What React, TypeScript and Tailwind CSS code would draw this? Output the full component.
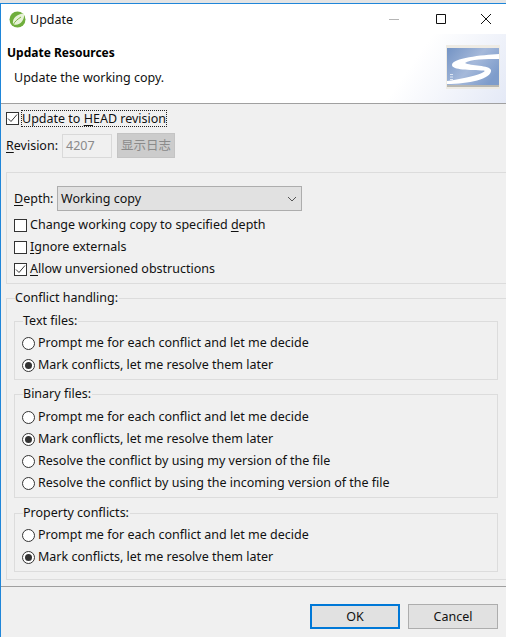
function Chk({ on }: { on?: boolean }) {
  return (
    <span className="flex h-[13px] w-[13px] shrink-0 items-center justify-center border border-[#333] bg-white">
      {on && (
        <svg width="11" height="11" viewBox="0 0 11 11" fill="none" stroke="#333" strokeWidth="1">
          <path d="M1 5.5 L4 8.5 L10 1.5" />
        </svg>
      )}
    </span>
  );
}

function U({ children }: { children: string }) {
  return <span className="underline underline-offset-2">{children}</span>;
}

function CheckRow({ on, children }: { on?: boolean; children: React.ReactNode }) {
  return (
    <div className="flex h-[22px] items-center gap-[3px]">
      <Chk on={on} />
      <span className="-mt-px">{children}</span>
    </div>
  );
}

function Radio({ on, children }: { on?: boolean; children: React.ReactNode }) {
  return (
    <div className="flex h-[22px] items-center gap-[3px]">
      <span className="flex h-[13px] w-[13px] shrink-0 items-center justify-center rounded-full border border-[#333] bg-white">
        {on && <span className="h-[7px] w-[7px] rounded-full bg-[#333]" />}
      </span>
      <span className="-mt-px">{children}</span>
    </div>
  );
}

function Logo() {
  return (
    <svg width="54" height="44" viewBox="0 0 54 44">
      <defs>
        <linearGradient id="lb" x1="0" y1="0" x2="1" y2="0.6">
          <stop offset="0" stopColor="#7393c4" />
          <stop offset="0.55" stopColor="#a5b9da" />
          <stop offset="1" stopColor="#7e9ccb" />
        </linearGradient>
      </defs>
      <rect x="0" y="0" width="54" height="44" fill="#eeebe4" />
      <rect x="1" y="3" width="52" height="38" fill="url(#lb)" />
      <rect x="1" y="40" width="52" height="2" fill="#b9b8b2" />
      <path d="M53 9 C36 10 6 13 6 20 C6 25 24 25 38 25.5 C42 27 24 33 1 36 L1 39 C22 39 46 34 45 25 C44 20 24 21 19 18 C24 14 40 14 53 14 Z" fill="#fff" />
      <path d="M4 29.5h3M4 32h3M4 34.5h3" stroke="#dfe7f3" strokeWidth="1" />
    </svg>
  );
}

export default function App() {
  return (
    <div
      className="flex h-[637px] w-[506px] flex-col overflow-hidden bg-[#f0f0f0] text-[12.5px] leading-[18px] text-[#111]"
      style={{ fontFamily: '"Noto Sans", "Noto Sans CJK SC", sans-serif' }}
    >
      <div className="h-[3px] shrink-0 bg-[#e4e4e4]" />
      <div className="flex min-h-0 flex-1 flex-col border-t border-l border-[#1f86d9]">
        {/* title bar */}
        <div className="flex h-[30px] shrink-0 items-center bg-white pl-2">
          <svg width="17" height="17" viewBox="0 0 17 17">
            <circle cx="8.5" cy="8.5" r="8" fill="#6fae3c" />
            <path d="M4 13.5 C3 7 8 3 15 2.5 C16 9 11 15 5 13.5 Z" fill="#e6f2d6" />
            <path d="M4 14 C6 10 9 8 12 6" stroke="#7cb342" strokeWidth="1" fill="none" />
          </svg>
          <span className="ml-[4px] mt-px text-[#111]">Update</span>
          <svg className="ml-auto mr-[5px]" width="112" height="14" viewBox="0 0 112 14" fill="none" strokeWidth="1">
            <path d="M0 7.5h10" stroke="#b5b5b5" />
            <path d="M47.5 2.5h9v9h-9z" stroke="#111" />
            <path d="M92 2l10 10M102 2l-10 10" stroke="#111" />
          </svg>
        </div>
        {/* banner */}
        <div className="relative flex h-[69px] shrink-0 flex-col overflow-hidden bg-[linear-gradient(125deg,#ffffff_78%,#e4e9f6_100%)] pl-[6px]">
          <div className="mt-[10px] h-[18px] text-[12px] font-bold text-black">Update Resources</div>
          <div className="ml-[7px] mt-[7px]">Update the working copy.</div>
          <div className="absolute right-[6px] top-[11px]">
            <Logo />
          </div>
        </div>
        <div className="h-px shrink-0 bg-[#a0a0a0]" />
        {/* main */}
        <div className="flex min-h-0 flex-1 flex-col">
          <div className="mt-[6px] flex h-[17px] items-center pl-[5px]">
            <Chk on />
            <span className="ml-[2px] border border-dotted border-[#222] px-0 leading-[15px]">
              Update to <U>H</U>EAD revision
            </span>
          </div>
          <div className="mt-[6px] flex h-[25px] items-center pl-[5px]">
            <span className="w-[56px]">
              <U>R</U>evision:
            </span>
            <span className="flex h-[24px] w-[50px] items-center border border-[#d9d9d9] bg-[#f0f0f0] pl-[3px] text-[#8a8a8a]">4207</span>
            <span className="ml-[5px] flex h-[25px] w-[58px] items-center justify-center border border-[#c4c4c4] bg-[#cccccc] text-[#8a8a8a]">显示日志</span>
          </div>
          {/* depth */}
          <div className="ml-[5px] mt-[14px] h-[112px] border border-r-0 border-[#dcdcdc] pl-[7px] pt-[13px]">
            <div className="flex h-[25px] items-center">
              <span className="w-[43px]">
                <U>D</U>epth:
              </span>
              <div className="flex h-[25px] w-[245px] items-center justify-between border border-[#adadad] bg-[#e1e1e1] pl-[3px] pr-[3px]">
                <span>Working copy</span>
                <svg width="12" height="12" viewBox="0 0 12 12" fill="none" stroke="#555" strokeWidth="1">
                  <path d="M2 4l4 4 4-4" />
                </svg>
              </div>
            </div>
            <div className="mt-[3px]">
              <CheckRow>
                Change working copy to specified <U>d</U>epth
              </CheckRow>
              <CheckRow>
                <U>I</U>gnore externals
              </CheckRow>
              <CheckRow on>
                <U>A</U>llow unversioned obstructions
              </CheckRow>
            </div>
          </div>
          {/* conflict */}
          <fieldset className="ml-[5px] mt-[5px] h-[291px] border border-r-0 border-[#dcdcdc] pl-[7px] pr-2">
            <legend className="ml-px h-[18px] bg-[#f0f0f0] pr-px leading-[18px]">Conflict handling:</legend>
            <div className="mt-[5px] flex flex-col">
              <fieldset className="h-[68px] border border-[#dcdcdc] pl-[7px] pr-2">
                <legend className="ml-px h-[18px] bg-[#f0f0f0] pr-px leading-[18px]">Text files:</legend>
                <div className="mt-[2px]">
                  <Radio>Prompt me for each conflict and let me decide</Radio>
                  <Radio on>Mark conflicts, let me resolve them later</Radio>
                </div>
              </fieldset>
              <fieldset className="mt-[5px] h-[113px] border border-[#dcdcdc] pl-[7px] pr-2">
                <legend className="ml-px h-[18px] bg-[#f0f0f0] pr-px leading-[18px]">Binary files:</legend>
                <div className="mt-[3px]">
                  <Radio>Prompt me for each conflict and let me decide</Radio>
                  <Radio on>Mark conflicts, let me resolve them later</Radio>
                  <Radio>Resolve the conflict by using my version of the file</Radio>
                  <Radio>Resolve the conflict by using the incoming version of the file</Radio>
                </div>
              </fieldset>
              <fieldset className="mt-[6px] h-[68px] border border-[#dcdcdc] pl-[7px] pr-2">
                <legend className="ml-px h-[18px] bg-[#f0f0f0] pr-px leading-[18px]">Property conflicts:</legend>
                <div className="mt-[2px]">
                  <Radio>Prompt me for each conflict and let me decide</Radio>
                  <Radio on>Mark conflicts, let me resolve them later</Radio>
                </div>
              </fieldset>
            </div>
          </fieldset>
          {/* footer */}
          <div className="mt-[6px] h-px bg-[#a0a0a0]" />
          <div className="flex justify-end gap-2 pr-[8px] pt-[17px]">
            <button className="h-[25px] w-[90px] border-2 border-[#0078d7] bg-[#e1e1e1]">OK</button>
            <button className="h-[25px] w-[90px] border border-[#adadad] bg-[#e1e1e1]">Cancel</button>
          </div>
        </div>
      </div>
    </div>
  );
}
